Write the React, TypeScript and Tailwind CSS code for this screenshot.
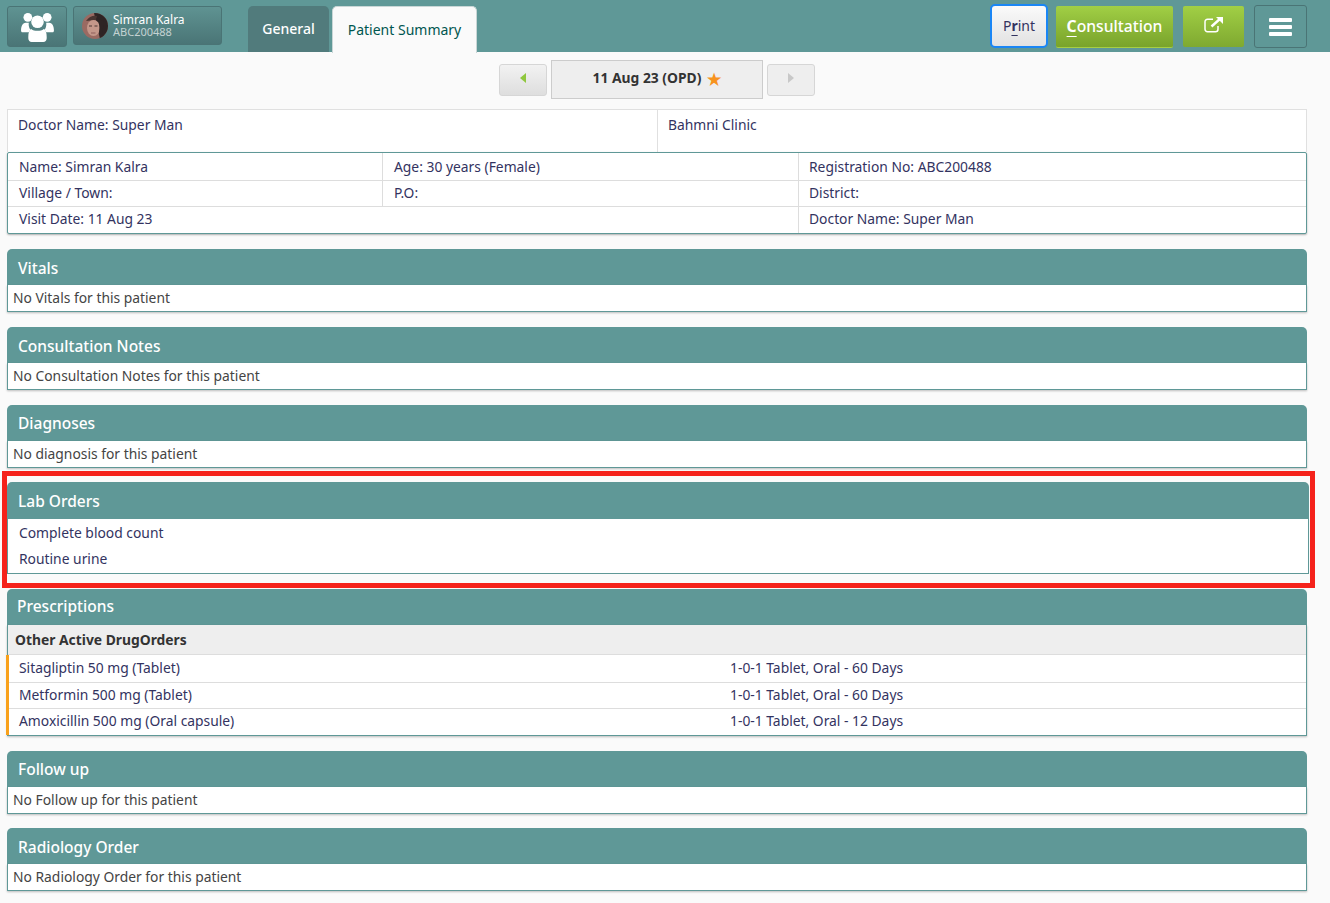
import React from 'react';

const UsersIcon = () => (
  <svg width="33" height="30" viewBox="0 0 34 31" fill="white">
    <circle cx="7" cy="5.500" r="4.500" />
    <circle cx="27" cy="5.500" r="4.500" />
    <circle cx="17" cy="10" r="6.500" />
    <path d="M0 19c0-5 2-8 5-8h3c-.5 3 .5 6 2 7.500-1 .5-1.500 1-2 2.500H1.500C.5 21 0 20 0 19z" />
    <path d="M34 19c0-5-2-8-5-8h-3c.5 3-.5 6-2 7.500 1 .5 1.500 1 2 2.500h6.500c1 0 1.500-1 1.500-2z" />
    <path d="M10.500 17.500c2 1.500 3.500 2 6.500 2s4.500-.5 6.500-2c2 1 3 4 3 8v1.500c0 2.500-1.500 4-3.500 4H11c-2 0-3.500-1.500-3.500-4v-1.500c0-4 1-7 3-8z" />
  </svg>
);

const ExternalIcon = () => (
  <svg width="20" height="17" viewBox="0 0 20 17" fill="none" stroke="white">
    <path d="M9 3.200H3.500A2.500 2.500 0 0 0 1 5.700v7.600a2.500 2.500 0 0 0 2.500 2.500h8a2.500 2.500 0 0 0 2.500-2.500V10" strokeWidth="1.500" />
    <path d="M7.500 10.500L17 2" strokeWidth="2.400" />
    <path d="M12 1h7v7z" fill="white" stroke="none" />
  </svg>
);

const Avatar = () => (
  <svg width="26" height="26" viewBox="0 0 26 26">
    <defs>
      <clipPath id="avatar-clip"><circle cx="13" cy="13" r="13" /></clipPath>
    </defs>
    <g clipPath="url(#avatar-clip)">
      <rect width="26" height="26" fill="#9a6a62" />
      <path d="M12 0h14v26h-8z" fill="#2e2424" />
      <path d="M4 8c3-5 8-6 11-5l-1 4z" fill="#4a3632" />
      <ellipse cx="11.500" cy="15" rx="6.500" ry="8" fill="#c4978a" />
      <path d="M14 5c3 3 4 8 3 14l3 3 2-14z" fill="#2e2424" />
      <rect x="9" y="19.500" width="4.500" height="1" fill="#8e5f5a" />
      <rect x="7" y="12.500" width="3" height="1" fill="#4a3632" />
      <rect x="12.500" y="12.500" width="3" height="1" fill="#4a3632" />
    </g>
  </svg>
);

const Section = ({
  title,
  className,
  headClass = 'h-9 pl-[11px] leading-[38px]',
  children,
}: {
  title: string;
  className: string;
  headClass?: string;
  children: React.ReactNode;
}) => (
  <section className={className}>
    <h2 className={`${headClass} rounded-t-[5px] bg-[#5f9897] text-[15.500px] font-medium text-white`}>{title}</h2>
    {children}
  </section>
);

const EmptyBody = ({ children }: { children: React.ReactNode }) => (
  <div className="h-[27px] border-x border-b border-[#5f9897] bg-white pl-[5px] leading-[26px] text-[#444444] shadow-[0_1px_2px_rgba(0,0,0,0.25)]">
    {children}
  </div>
);

const cell = 'pl-[11px]';
const lastCol = 'pl-[10px]';
const firstRow = 'h-[27px] leading-[27px]';
const midRow = 'h-[26px] leading-[24px] border-t border-[#dddddd]';
const lastRow = 'h-[27px] leading-[24px] border-t border-[#dddddd]';

const drugs = [
  ['Sitagliptin 50 mg (Tablet)', '1-0-1 Tablet, Oral - 60 Days'],
  ['Metformin 500 mg (Tablet)', '1-0-1 Tablet, Oral - 60 Days'],
  ['Amoxicillin 500 mg (Oral capsule)', '1-0-1 Tablet, Oral - 12 Days'],
];

export default function App() {
  return (
    <div className="relative h-[903px] overflow-hidden bg-[#fafafa] font-['Open_Sans',sans-serif] text-[13.850px] text-[#33335f]">
      <header className="flex h-[52px] items-start bg-[#5f9897] pl-[7px]">
        <button className="mt-[6px] flex h-[41px] w-[60px] items-center justify-center rounded-[3px] border border-[#4a7475] bg-gradient-to-b from-[#5f9392] to-[#4a7576]">
          <UsersIcon />
        </button>
        <button className="mt-[6px] ml-[6px] flex h-[39px] w-[149px] items-center rounded-[3px] border border-[#4a7475] bg-gradient-to-b from-[#5f9392] to-[#4a7576] pl-2 text-left">
          <Avatar />
          <span className="ml-[5px] flex flex-col">
            <span className="text-xs leading-[13px] text-white">Simran Kalra</span>
            <span className="text-[11px] leading-[12px] text-[#c4d2d2]">ABC200488</span>
          </span>
        </button>
        <div className="mt-[6px] ml-[26px] flex h-[46px] w-[81px] items-center justify-center rounded-t-[5px] bg-[#517b7c] text-sm font-medium text-white">
          General
        </div>
        <div className="mt-[6px] ml-[3px] flex h-[47px] w-[145px] items-center justify-center rounded-t-[5px] border-x border-t border-[#c9d6d6] bg-[#fafafa] text-sm text-[#00564f]">
          Patient Summary
        </div>
        <div className="ml-auto flex items-start pr-[23px]">
          <button className="mt-1 h-[44px] w-[58px] rounded-[5px] border-2 border-[#1a86f5] bg-gradient-to-b from-[#fafafa] to-[#e2e2e2] text-sm text-[#33335f]">
            P<span className="font-bold underline decoration-1 underline-offset-4">r</span>int
          </button>
          <button className="mt-[6px] ml-[8px] h-[42px] w-[117px] rounded-[2px] border-b border-[#a6cf43] bg-gradient-to-b from-[#a1cf45] to-[#79a32b] text-[15.700px] font-medium text-white">
            <span className="font-bold underline decoration-1 underline-offset-4">C</span>onsultation
          </button>
          <button className="mt-[6px] ml-[10px] flex h-[41px] w-[61px] items-center justify-center rounded-[2px] bg-gradient-to-b from-[#a1cf45] to-[#7fa930] pb-1">
            <ExternalIcon />
          </button>
          <button className="mt-[5px] ml-[10px] flex h-[43px] w-[53px] flex-col items-center justify-center gap-[3px] rounded-[3px] border border-[#4a7475] bg-[#5f9897]">
            <span className="h-1 w-[23px] rounded-[1px] bg-white" />
            <span className="h-1 w-[23px] rounded-[1px] bg-white" />
            <span className="h-1 w-[23px] rounded-[1px] bg-white" />
          </button>
        </div>
      </header>

      <nav className="mt-[8px] flex h-[39px] items-start justify-center pr-4">
        <button className="mt-[4px] flex h-8 w-12 items-center justify-center rounded-[3px] border border-[#d6d6d6] bg-gradient-to-b from-[#f2f2f2] to-[#dedede]">
          <span className="mb-1 border-y-[5px] border-r-[6px] border-y-transparent border-r-[#8fc73e]" />
        </button>
        <div className="ml-1 flex h-[39px] w-[212px] items-center justify-center gap-[6px] border border-[#cccccc] bg-[#eeeeee] pb-[2px] text-[13.850px] font-bold text-[#333333]">
          11 Aug 23 (OPD)
          <span className="text-base leading-none text-[#f7931e]">★</span>
        </div>
        <button className="mt-[4px] ml-1 flex h-8 w-12 items-center justify-center rounded-[3px] border border-[#d6d6d6] bg-[#eeeeee]">
          <span className="mb-1 border-y-[5px] border-l-[6px] border-y-transparent border-l-[#c8c8c8]" />
        </button>
      </nav>

      <main className="ml-[7px] flex w-[1300px] flex-col">
        <div className="mt-[10px] grid h-[43px] grid-cols-[649px_1fr] border-x border-t border-[#e0e0e0] bg-white">
          <div className="pt-[5px] pl-[10px]">Doctor Name: Super Man</div>
          <div className="border-l border-[#e0e0e0] pt-[5px] pl-[10px]">Bahmni Clinic</div>
        </div>

        <div className="grid grid-cols-[374px_416px_1fr] rounded-[2px] border border-[#5f9897] bg-white shadow-[0_1px_2px_rgba(0,0,0,0.3)]">
          <div className={`${cell} ${firstRow}`}>Name: Simran Kalra</div>
          <div className={`${cell} ${firstRow} border-l border-[#dddddd]`}>Age: 30 years (Female)</div>
          <div className={`${lastCol} ${firstRow} border-l border-[#dddddd]`}>Registration No: ABC200488</div>
          <div className={`${cell} ${midRow}`}>Village / Town:</div>
          <div className={`${cell} ${midRow} border-l`}>P.O:</div>
          <div className={`${lastCol} ${midRow} border-l`}>District:</div>
          <div className={`${cell} ${lastRow} col-span-2`}>Visit Date: 11 Aug 23</div>
          <div className={`${lastCol} ${lastRow} border-l`}>Doctor Name: Super Man</div>
        </div>

        <Section title="Vitals" className="mt-[15px]">
          <EmptyBody>No Vitals for this patient</EmptyBody>
        </Section>
        <Section title="Consultation Notes" className="mt-[15px]">
          <EmptyBody>No Consultation Notes for this patient</EmptyBody>
        </Section>
        <Section title="Diagnoses" className="mt-[15px]" headClass="h-9 pl-[11px] leading-[36px]">
          <EmptyBody>No diagnosis for this patient</EmptyBody>
        </Section>

        <Section title="Lab Orders" className="mt-[14px] w-[1302px]" headClass="h-[37px] pl-[11px] leading-[38px]">
          <div className="h-[55px] border-x border-b border-[#5f9897] bg-white pt-[1px] leading-[26px]">
            <div className={cell}>Complete blood count</div>
            <div className={cell}>Routine urine</div>
          </div>
        </Section>

        <Section title="Prescriptions" className="mt-[15px]" headClass="h-9 pl-[10px] leading-[34px]">
          <div className="border-x border-b border-[#5f9897] bg-white shadow-[0_1px_2px_rgba(0,0,0,0.25)]">
            <div className="h-[30px] border-b border-[#dddddd] bg-[#eeeeee] pl-[7px] leading-[29px] font-bold text-[#333333]">
              Other Active DrugOrders
            </div>
            {drugs.map(([name, dose], i) => (
              <div
                key={name}
                className={`-ml-[2px] grid h-[26.500px] grid-cols-[711px_1fr] border-l-[3px] border-[#f9a11b] pl-[10px] leading-[26px] ${i > 0 ? 'shadow-[inset_0_1px_0_#dddddd]' : ''}`}
              >
                <span>{name}</span>
                <span>{dose}</span>
              </div>
            ))}
          </div>
        </Section>

        <Section title="Follow up" className="mt-[15px]" headClass="h-9 pl-[11px] leading-[36px]">
          <EmptyBody>No Follow up for this patient</EmptyBody>
        </Section>
        <Section title="Radiology Order" className="mt-[14px]">
          <EmptyBody>No Radiology Order for this patient</EmptyBody>
        </Section>
      </main>

      <div className="pointer-events-none absolute top-[471px] left-[2px] h-[117px] w-[1313px] border-[5px] border-[#f5221b]" />
    </div>
  );
}
